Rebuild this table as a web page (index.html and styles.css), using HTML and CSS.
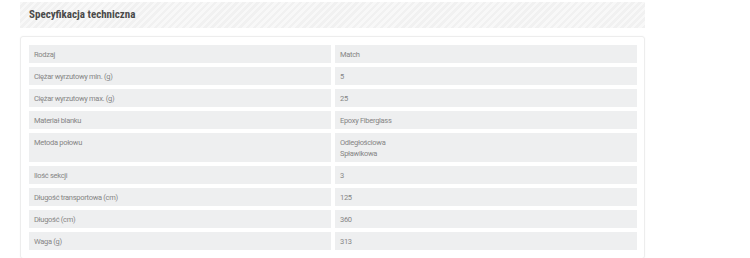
FILE: index.html
```html
<!DOCTYPE html>
<html lang="pl">
<head>
<meta charset="utf-8">
<title>Specyfikacja techniczna</title>
<link rel="stylesheet" href="styles.css">
</head>
<body>
<section class="spec">
  <header class="spec-head"><h2 class="spec-title">Specyfikacja techniczna</h2></header>
  <div class="spec-card">
    <div class="spec-grid">
      <div class="cell">Rodzaj</div><div class="cell">Match</div>
      <div class="cell">Ciężar wyrzutowy min. (g)</div><div class="cell">5</div>
      <div class="cell">Ciężar wyrzutowy max. (g)</div><div class="cell">25</div>
      <div class="cell">Materiał blanku</div><div class="cell">Epoxy Fiberglass</div>
      <div class="cell">Metoda połowu</div><div class="cell">Odległościowa<br>Spławikowa</div>
      <div class="cell">Ilość sekcji</div><div class="cell">3</div>
      <div class="cell">Długość transportowa (cm)</div><div class="cell">125</div>
      <div class="cell">Długość (cm)</div><div class="cell">360</div>
      <div class="cell">Waga (g)</div><div class="cell">313</div>
    </div>
  </div>
</section>
</body>
</html>
```
FILE: styles.css
```css
html, body {
  margin: 0;
  padding: 0;
  background: #fff;
}
body {
  font-family: Roboto, "Liberation Sans", Arial, sans-serif;
}
.spec {
  width: 625px;
  margin-left: 20px;
  padding-top: 2px;
}
.spec-head {
  height: 26px;
  padding-left: 9px;
  background: repeating-linear-gradient(135deg, #f8f8f8 0 2.5px, #f1f1f1 2.5px 5px);
  display: flex;
  align-items: center;
}
.spec-title {
  margin: 0;
  font-size: 11px;
  font-weight: 700;
  font-stretch: 75%;
  color: #4a4a4a;
  line-height: 12px;
}
.spec-card {
  margin-top: 8px;
  border: 1px solid #ededed;
  border-radius: 3px;
  box-shadow: 0 0 2px rgba(0,0,0,0.04);
  padding: 8px 7px 8px 8px;
}
.spec-grid {
  display: grid;
  grid-template-columns: 302px 1fr;
  gap: 4px;
}
.cell {
  background: #eeeff0;
  padding: 4px 5px 3px;
  font-size: 7.5px;
  letter-spacing: -0.3px;
  line-height: 11px;
  color: #858585;
}
```
